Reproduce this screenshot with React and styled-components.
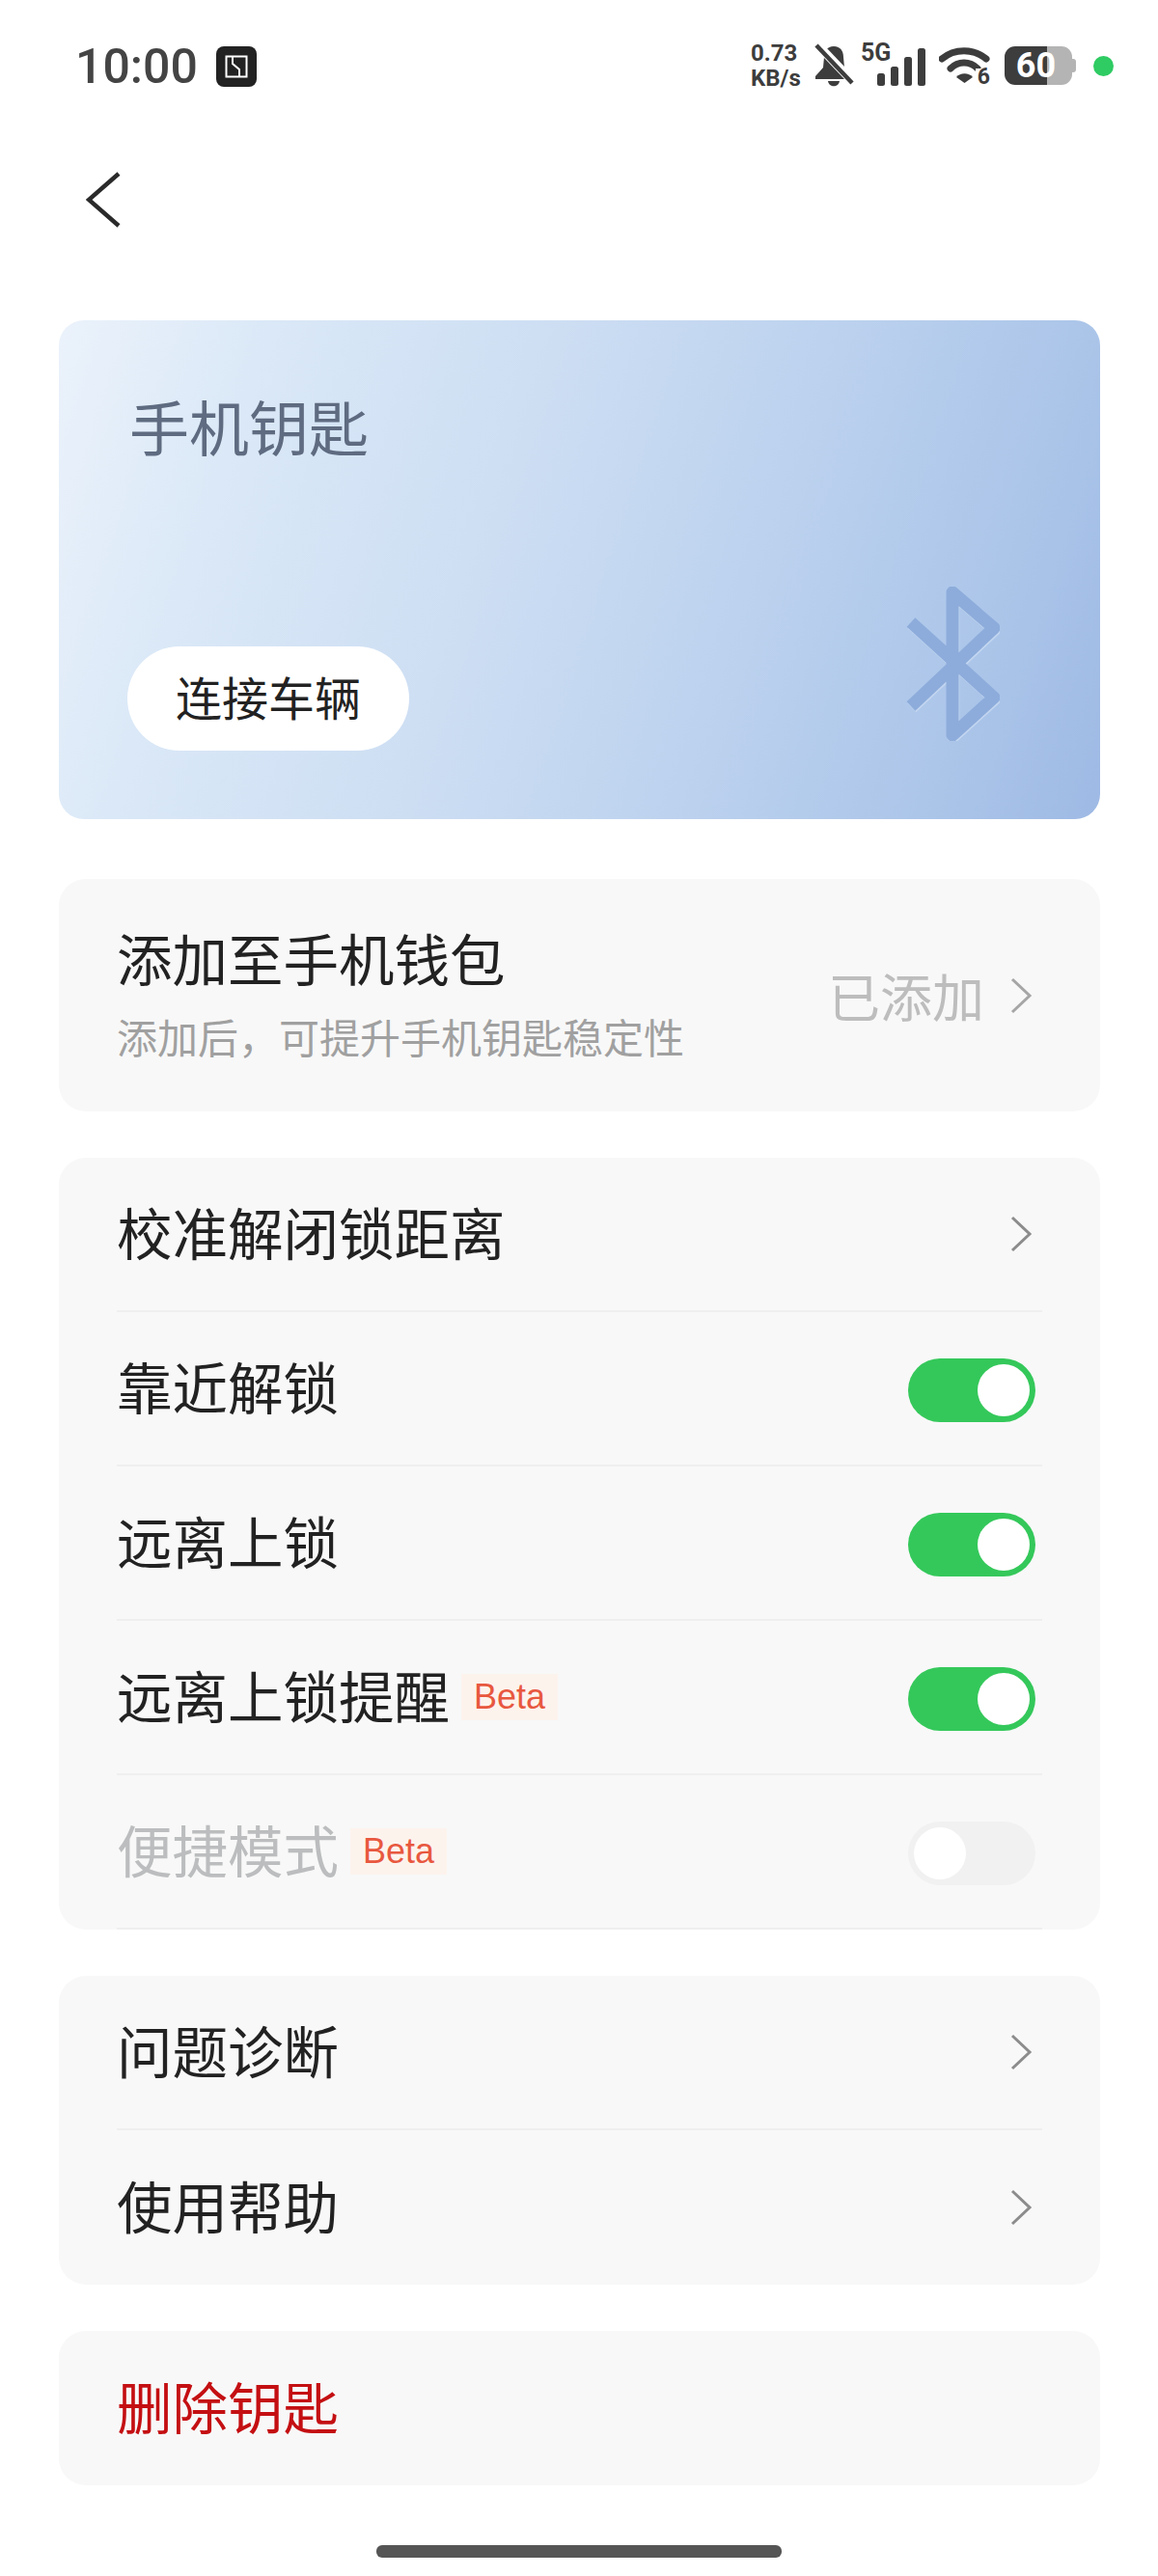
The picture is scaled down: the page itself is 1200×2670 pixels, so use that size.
import styled, { createGlobalStyle } from "styled-components";

const GlobalStyle = createGlobalStyle`
    html, body {
        margin: 0;
        padding: 0;
        background: #fff;
    }
    * {
        box-sizing: border-box;
    }
`;

const cjk = `"Noto Sans CJK SC", "Noto Sans", sans-serif`;

function BackIcon() {
    return (
        <svg width="36" height="58" viewBox="0 0 36 58">
            <path d="M34 2 L3 29 L34 56" fill="none" stroke="#2a2a2a" strokeWidth="4.5" />
        </svg>
    );
}

function ChevronIcon({ color = "#8c8c8c" }) {
    return (
        <svg width="24" height="38" viewBox="0 0 24 38">
            <path d="M3 2 L21 19 L3 36" fill="none" stroke={color} strokeWidth="3" />
        </svg>
    );
}

function ChipIcon() {
    return (
        <svg width="42" height="42" viewBox="0 0 42 42">
            <rect width="42" height="42" rx="8" fill="#222" />
            <rect x="10.5" y="10.5" width="21" height="21" fill="none" stroke="#fff" strokeWidth="2" />
            <path d="M17 11 L17 18 L24 24 L24 31" fill="none" stroke="#fff" strokeWidth="2" />
        </svg>
    );
}

function BellOffIcon() {
    return (
        <svg width="41" height="46" viewBox="0 0 41 46">
            <path d="M20 3 C13 3 10 8 10 14 L9 25 L1 34 L1 37 L38 37 L38 34 L31 25 L30 14 C30 8 27 3 20 3 Z" fill="#3d3d3d" />
            <path d="M14 39 L26 39 C25 46 15 46 14 39 Z" fill="#3d3d3d" />
            <path d="M1 -1 L40 40" stroke="#fff" strokeWidth="9" />
            <path d="M2 2 L39 41" stroke="#3d3d3d" strokeWidth="4.5" />
        </svg>
    );
}

function SignalIcon() {
    return (
        <svg width="50" height="40" viewBox="0 0 50 40">
            <rect x="0" y="26" width="8" height="13" rx="2.5" fill="#3d3d3d" />
            <rect x="14" y="19" width="8" height="20" rx="2.5" fill="#3d3d3d" />
            <rect x="28" y="9" width="8" height="30" rx="2.5" fill="#3d3d3d" />
            <rect x="42" y="0" width="8" height="39" rx="2.5" fill="#3d3d3d" />
        </svg>
    );
}

function WifiIcon() {
    return (
        <svg width="53" height="38" viewBox="0 0 53 38">
            <path d="M3 12 C16 1 36 1 49 12" fill="none" stroke="#3d3d3d" strokeWidth="7" strokeLinecap="round" />
            <path d="M12 22 C20 14 32 14 40 22" fill="none" stroke="#3d3d3d" strokeWidth="7" strokeLinecap="round" />
            <path d="M18 31 C22 26 31 26 35 31 L26.5 37 Z" fill="#3d3d3d" />
        </svg>
    );
}

function BluetoothIcon() {
    const d = "M6 37 L92 115 L49 154 L49 6 L92 43 L6 124";
    return (
        <svg width="98" height="160" viewBox="0 0 98 160">
            <path d={d} transform="translate(0.8 1.4)" fill="none" stroke="#c3d6f0" strokeWidth="13" strokeLinejoin="round" />
            <path d={d} fill="none" stroke="#8dacdb" strokeWidth="13" strokeLinejoin="round" />
        </svg>
    );
}

function Toggle({ on }) {
    return (
        <Track $on={on}>
            <Knob />
        </Track>
    );
}

export default function App() {
    return (
        <Page>
            <GlobalStyle />
            <StatusBar>
                <StatusLeft>
                    <Time>10:00</Time>
                    <ChipIcon />
                </StatusLeft>
                <StatusRight>
                    <NetSpeed>
                        <span>0.73</span>
                        <span>KB/s</span>
                    </NetSpeed>
                    <BellOffIcon />
                    <Signal>
                        <FiveG>5G</FiveG>
                        <SignalIcon />
                    </Signal>
                    <Wifi>
                        <WifiIcon />
                        <WifiSix>6</WifiSix>
                    </Wifi>
                    <Battery>60</Battery>
                    <Dot />
                </StatusRight>
            </StatusBar>

            <NavBar>
                <BackIcon />
            </NavBar>

            <Content>
                <Hero>
                    <HeroTitle>手机钥匙</HeroTitle>
                    <HeroBottom>
                        <ConnectButton>连接车辆</ConnectButton>
                        <BluetoothIcon />
                    </HeroBottom>
                </Hero>

                <WalletCard>
                    <WalletText>
                        <RowTitle>添加至手机钱包</RowTitle>
                        <RowSub>添加后，可提升手机钥匙稳定性</RowSub>
                    </WalletText>
                    <RowRight>
                        <Added>已添加</Added>
                        <ChevronIcon color="#a6a6a6" />
                    </RowRight>
                </WalletCard>

                <Group>
                    <Row>
                        <RowTitle>校准解闭锁距离</RowTitle>
                        <ChevronSlot><ChevronIcon /></ChevronSlot>
                    </Row>
                    <Row>
                        <RowTitle>靠近解锁</RowTitle>
                        <Toggle on />
                    </Row>
                    <Row>
                        <RowTitle>远离上锁</RowTitle>
                        <Toggle on />
                    </Row>
                    <Row>
                        <TitleWrap>
                            <RowTitle>远离上锁提醒</RowTitle>
                            <BetaTag>Beta</BetaTag>
                        </TitleWrap>
                        <Toggle on />
                    </Row>
                    <Row>
                        <TitleWrap>
                            <RowTitle $muted>便捷模式</RowTitle>
                            <BetaTag>Beta</BetaTag>
                        </TitleWrap>
                        <Toggle />
                    </Row>
                </Group>

                <Group>
                    <Row>
                        <RowTitle>问题诊断</RowTitle>
                        <ChevronSlot><ChevronIcon /></ChevronSlot>
                    </Row>
                    <Row $last>
                        <RowTitle>使用帮助</RowTitle>
                        <ChevronSlot><ChevronIcon /></ChevronSlot>
                    </Row>
                </Group>

                <Group>
                    <Row $last>
                        <RowTitle $danger>删除钥匙</RowTitle>
                    </Row>
                </Group>
            </Content>

            <HomeBar />
        </Page>
    );
}

const Page = styled.div`
    width: 1200px;
    height: 2670px;
    background: #fff;
    font-family: ${cjk};
    overflow: hidden;
`;

const StatusBar = styled.div`
    display: flex;
    justify-content: space-between;
    align-items: center;
    height: 136px;
    padding: 0 46px 0 78px;
`;

const StatusLeft = styled.div`
    display: flex;
    align-items: center;
    gap: 19px;
    margin-top: 2px;
`;

const Time = styled.div`
    font-family: Roboto, sans-serif;
    font-size: 50px;
    font-weight: 500;
    color: #444;
    line-height: 42px;
`;

const StatusRight = styled.div`
    display: flex;
    align-items: center;
`;

const NetSpeed = styled.div`
    display: flex;
    flex-direction: column;
    width: 52px;
    margin-right: 14px;
    font-family: Roboto, sans-serif;
    font-size: 24px;
    font-weight: 700;
    line-height: 26px;
    color: #3d3d3d;
    white-space: nowrap;
`;

const Signal = styled.div`
    position: relative;
    display: flex;
    justify-content: flex-end;
    align-items: flex-end;
    width: 67px;
    height: 44px;
    margin: 0 14px 0 7px;
`;

const FiveG = styled.span`
    position: absolute;
    left: 0;
    top: -3px;
    font-family: Roboto, sans-serif;
    font-size: 25px;
    font-weight: 700;
    line-height: 24px;
    color: #3d3d3d;
`;

const Wifi = styled.div`
    position: relative;
    display: flex;
    width: 53px;
    height: 38px;
    margin: 0 15px 0 0;
`;

const WifiSix = styled.span`
    position: absolute;
    right: 0;
    bottom: -2px;
    padding-left: 2px;
    background: #fff;
    font-family: Roboto, sans-serif;
    font-size: 23px;
    font-weight: 700;
    line-height: 18px;
    color: #3d3d3d;
`;

const Battery = styled.div`
    position: relative;
    display: flex;
    align-items: center;
    justify-content: center;
    width: 70px;
    height: 40px;
    margin-right: 22px;
    padding-right: 5px;
    border-radius: 11px;
    background: linear-gradient(90deg, #3d3d3d 63%, #b4b4b4 63%);
    font-family: Roboto, sans-serif;
    font-size: 36px;
    font-weight: 700;
    color: #fff;

    &::after {
        content: "";
        position: absolute;
        right: -4px;
        top: 13px;
        width: 4px;
        height: 14px;
        border-radius: 0 3px 3px 0;
        background: #b4b4b4;
    }
`;

const Dot = styled.div`
    width: 21px;
    height: 21px;
    border-radius: 50%;
    background: #2fcb63;
`;

const NavBar = styled.div`
    display: flex;
    align-items: center;
    height: 196px;
    padding: 0 0 54px 89px;
`;

const Content = styled.div`
    display: flex;
    flex-direction: column;
    gap: 48px;
    padding: 0 60px 0 61px;
`;

const Hero = styled.div`
    display: flex;
    flex-direction: column;
    justify-content: space-between;
    height: 517px;
    margin-bottom: 14px;
    padding: 72px 104px 81px 71px;
    border-radius: 26px;
    background: linear-gradient(108deg, #ebf2fb 0%, #dae8f7 18%, #cddef3 42%, #bbd1ee 66%, #abc5e9 86%, #9eb9e4 100%);
`;

const HeroTitle = styled.div`
    padding-left: 2px;
    font-size: 62px;
    line-height: 74px;
    color: #5e6b80;
`;

const HeroBottom = styled.div`
    display: flex;
    justify-content: space-between;
    align-items: flex-end;
`;

const ConnectButton = styled.div`
    display: flex;
    align-items: center;
    justify-content: center;
    width: 292px;
    height: 108px;
    margin-bottom: -10px;
    padding-bottom: 6px;
    border-radius: 54px;
    background: #fff;
    font-size: 48px;
    color: #222;
`;

const Group = styled.div`
    padding: 0 60px;
    border-radius: 28px;
    background: #f8f8f8;
`;

const WalletCard = styled(Group)`
    display: flex;
    justify-content: space-between;
    align-items: center;
    height: 241px;
`;

const WalletText = styled.div`
    padding-bottom: 10px;
`;

const Row = styled.div`
    display: flex;
    justify-content: space-between;
    align-items: center;
    height: 160px;
    border-bottom: ${(p) => (p.$last ? "none" : "2px solid #efefef")};
`;

const TitleWrap = styled.div`
    display: flex;
    align-items: center;
    gap: 12px;
`;

const RowTitle = styled.div`
    padding-bottom: 6px;
    font-size: 57.5px;
    line-height: 80px;
    color: ${(p) => (p.$danger ? "#c40f12" : p.$muted ? "#bbbdbe" : "#222")};
`;

const RowSub = styled.div`
    margin-top: 8px;
    font-size: 42px;
    line-height: 56px;
    color: #a0a0a0;
`;

const RowRight = styled.div`
    display: flex;
    align-items: center;
    gap: 26px;
    margin-right: 10px;
`;

const ChevronSlot = styled.div`
    display: flex;
    margin-right: 10px;
`;

const Added = styled.span`
    font-size: 54px;
    color: #bdbdbd;
`;

const BetaTag = styled.span`
    display: flex;
    align-items: center;
    justify-content: center;
    width: 100px;
    height: 48px;
    background: #fdf3ed;
    font-family: "Liberation Sans", Arial, sans-serif;
    font-size: 36px;
    color: #e8583f;
`;

const Track = styled.div`
    display: flex;
    justify-content: ${(p) => (p.$on ? "flex-end" : "flex-start")};
    align-items: center;
    width: 132px;
    height: 66px;
    margin: 3px 7px 0 0;
    padding: 0 6px;
    border-radius: 33px;
    background: ${(p) => (p.$on ? "#34c85a" : "#f1f1f1")};
`;

const Knob = styled.div`
    width: 54px;
    height: 54px;
    border-radius: 50%;
    background: #fff;
`;

const HomeBar = styled.div`
    width: 420px;
    height: 13px;
    margin: 62px auto 0;
    border-radius: 6px;
    background: #555;
`;
